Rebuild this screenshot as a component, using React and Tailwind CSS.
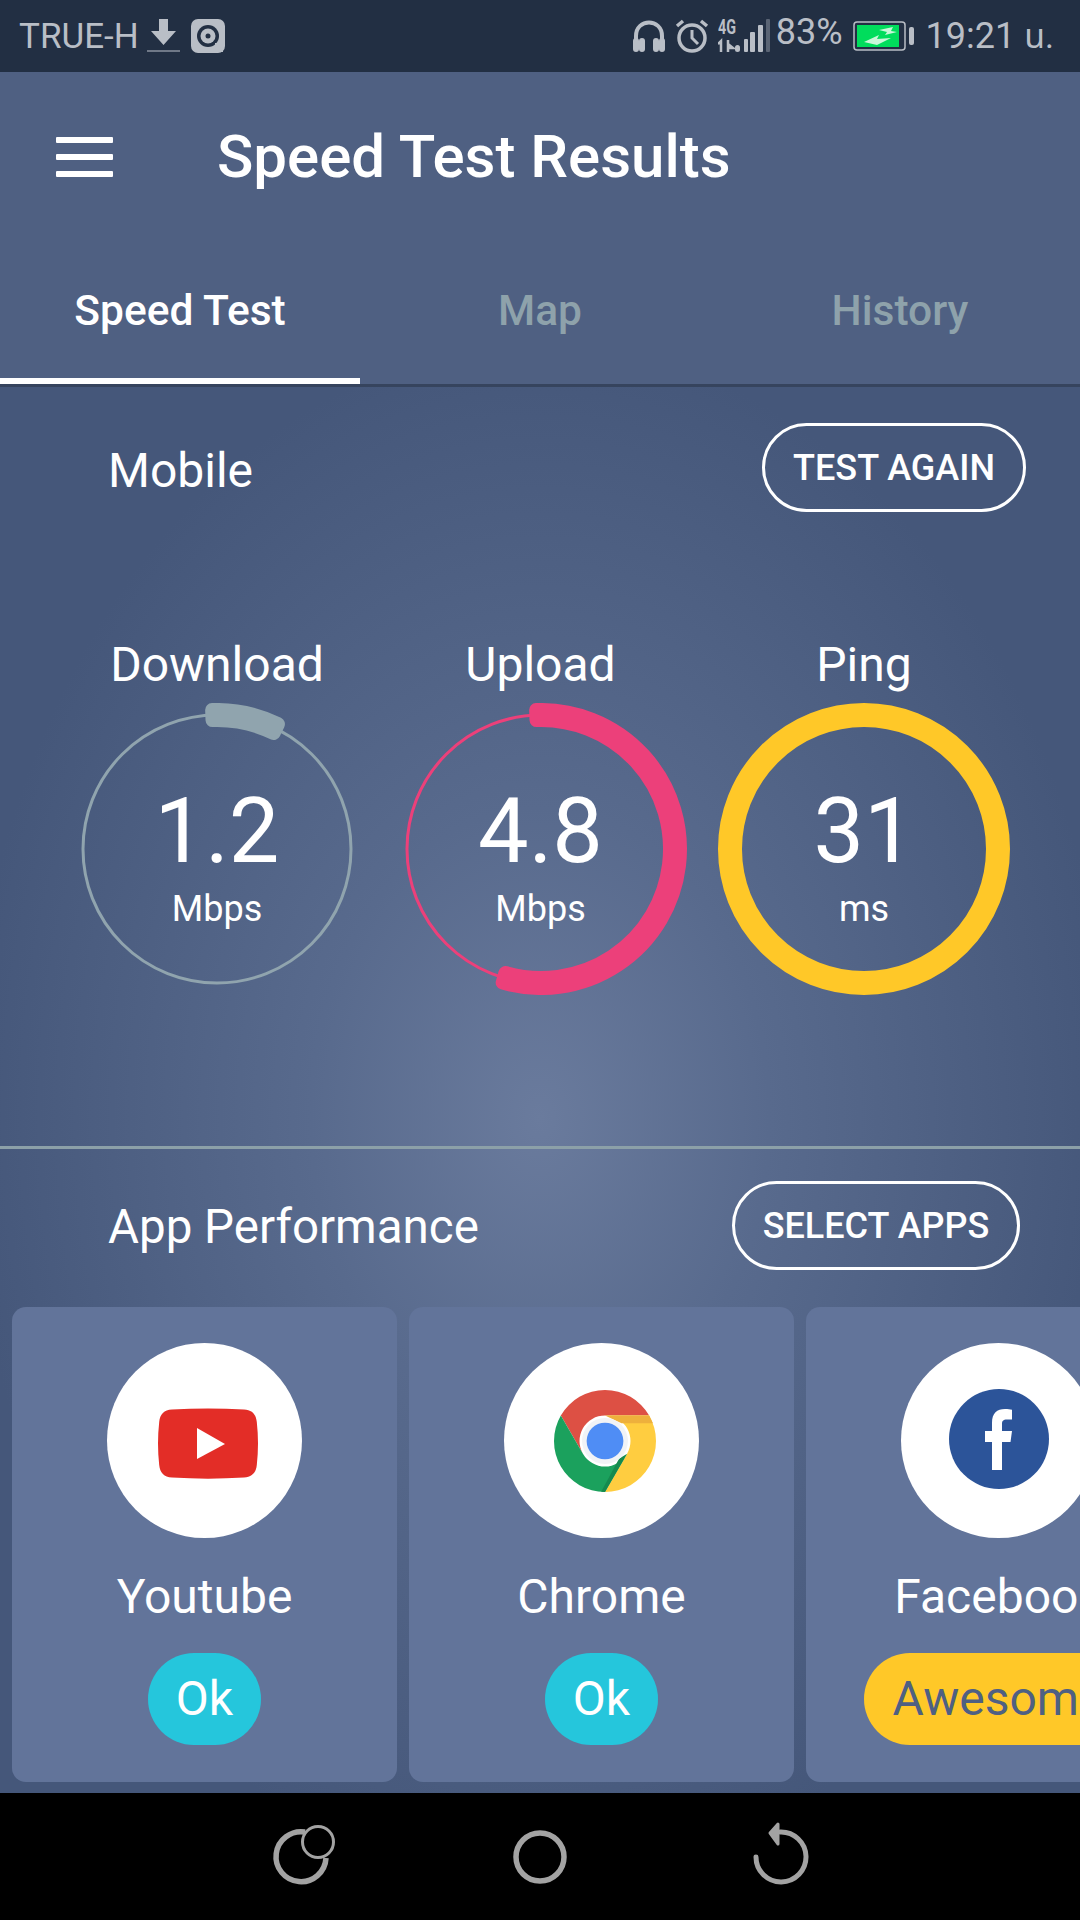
const font = { sans: "font-['Roboto','Noto_Sans','Noto_Sans_Thai',sans-serif]" };

// annular sector with soft corners, angles in degrees clockwise from 12 o'clock
function sector(cx, cy, r1, r2, a1, a2) {
  const pt = (r, a) => {
    const t = ((a - 90) * Math.PI) / 180;
    return `${(cx + r * Math.cos(t)).toFixed(2)} ${(cy + r * Math.sin(t)).toFixed(2)}`;
  };
  const big = a2 - a1 > 180 ? 1 : 0;
  return `M${pt(r2, a1)} A${r2} ${r2} 0 ${big} 1 ${pt(r2, a2)} L${pt(r1, a2)} A${r1} ${r1} 0 ${big} 0 ${pt(r1, a1)} Z`;
}

function Gauge({ label, value, unit, color, from, to, full }) {
  return (
    <div className="flex w-[292px] shrink-0 flex-col items-center">
      <div className="mb-[11px] text-[48px] leading-[54px] text-white">{label}</div>
      <div className="relative h-[292px] w-[292px]">
        <svg width="292" height="292" viewBox="0 0 292 292">
          {full ? (
            <circle cx="146" cy="146" r="134" fill="none" stroke={color} strokeWidth="24" />
          ) : (
            <>
              <circle cx="146" cy="146" r="134" fill="none" stroke={color} strokeWidth="3" />
              <path
                d={sector(146, 146, 129, 139, from, to)}
                fill={color}
                stroke={color}
                strokeWidth="14"
                strokeLinejoin="round"
              />
            </>
          )}
        </svg>
        <div className="absolute inset-0 flex flex-col items-center">
          <div className="mt-[76px] text-[90px] leading-[106px] text-white">{value}</div>
          <div className="mt-[3px] text-[36px] leading-[42px] text-white">{unit}</div>
        </div>
      </div>
    </div>
  );
}

function OutlineButton({ children, className }) {
  return (
    <div
      className={`flex h-[89px] items-center justify-center rounded-full border-[3px] border-white text-[36px] font-medium text-white ${className}`}
    >
      {children}
    </div>
  );
}

function YoutubeIcon() {
  return (
    <svg width="100" height="71" viewBox="0 0 100 71" className="translate-x-[3px] translate-y-[3px]">
      <path
        d="M14 1.500C38 0 62 0 86 1.500 94 2 98 6 98.800 14 100.400 28 100.400 43 98.800 57 98 65 94 69 86 69.500 62 71 38 71 14 69.500 6 69 2 65 1.200 57 -.4 43 -.4 28 1.200 14 2 6 6 2 14 1.500Z"
        fill="#e32d27"
      />
      <path d="M39 20 L67 36 L39 51Z" fill="#fff" />
    </svg>
  );
}

function ChromeIcon() {
  return (
    <svg width="102" height="102" viewBox="4 4 40 40" className="translate-x-[3px]">
      <path d="M24 14H41.320A20 20 0 0 0 6.680 14L15.340 29A10 10 0 0 1 24 14Z" fill="#dd5044" />
      <path d="M41.320 14H24A10 10 0 0 1 32.660 29L24 44A20 20 0 0 0 41.320 14Z" fill="#ffcd40" />
      <path d="M41.320 14H24L30.500 17H42.800Z" fill="#eeb03c" />
      <path d="M24 44L32.660 29A10 10 0 0 1 15.340 29L6.680 14A20 20 0 0 0 24 44Z" fill="#1ba15d" />
      <path d="M32.660 29L24 44L22.500 43.900L29.500 31Z" fill="#158a4e" />
      <circle cx="24" cy="24" r="9" fill="#f1f3f6" />
      <circle cx="24" cy="24" r="7.200" fill="#4f8df5" />
    </svg>
  );
}

function FacebookIcon() {
  return (
    <svg width="100" height="100" viewBox="0 0 100 100" className="-translate-y-[2px]">
      <circle cx="50" cy="50" r="50" fill="#2c5499" />
      <path
        d="M43 81V53H36V42H43V34C43 24 48 20 56 20C59 20 61 20.500 63 20.800V30.500H58C54 30.500 53 32 53 35V42H63L61.500 53H53V81Z"
        fill="#fff"
      />
    </svg>
  );
}

const apps = [
  { name: "Youtube", status: "Ok", icon: <YoutubeIcon /> },
  { name: "Chrome", status: "Ok", icon: <ChromeIcon /> },
  { name: "Facebook", status: "Awesome", icon: <FacebookIcon />, good: true },
];

function AppCard({ app }) {
  return (
    <div className="flex h-[475px] w-[385px] shrink-0 flex-col items-center rounded-[14px] bg-[#62749a] pt-[36px]">
      <div className="flex h-[195px] w-[195px] shrink-0 items-center justify-center rounded-full bg-white">
        {app.icon}
      </div>
      <div className="mt-[32px] text-[48px] leading-[54px] whitespace-nowrap text-white">{app.name}</div>
      <div
        className={`mt-[29px] flex h-[92px] items-center rounded-full text-[48px] whitespace-nowrap ${
          app.good ? "bg-[#ffc828] px-[29px] text-[#4f6082]" : "bg-[#25c6dc] px-[28px] text-white"
        }`}
      >
        {app.status}
      </div>
    </div>
  );
}

function StatusBar() {
  const c = "#b9bec6";
  return (
    <div className="flex h-[72px] shrink-0 items-center justify-between bg-[#222f43] pr-[26px] pl-[19px] text-[#b9bec6]">
      <div className="flex items-center">
        <span className="text-[35px] leading-none">TRUE-H</span>
        <svg width="34" height="36" viewBox="0 0 34 36" className="ml-[8px]">
          <path d="M12 1H21V13H29L16.500 27L4 13H12Z" fill={c} />
          <rect x="0" y="32" width="33" height="2" fill="#6f7887" />
        </svg>
        <svg width="34" height="34" viewBox="0 0 34 34" className="ml-[10px]">
          <rect width="34" height="34" rx="7" fill={c} />
          <circle cx="17" cy="17" r="11" fill="#222f43" />
          <circle cx="17" cy="17" r="7.500" fill={c} />
          <circle cx="17" cy="17" r="2.500" fill="#222f43" />
          <path d="M24 24H32V33H24Z" fill={c} />
        </svg>
      </div>
      <div className="flex items-center">
        <svg width="32" height="34" viewBox="0 0 32 34">
          <path d="M3 28V17C3 -1 29 -1 29 17V28" fill="none" stroke={c} strokeWidth="4" />
          <rect x="0" y="19" width="6" height="14" rx="3" fill={c} />
          <rect x="6" y="19" width="6" height="14" rx="3" fill={c} />
          <rect x="20" y="19" width="6" height="14" rx="3" fill={c} />
          <rect x="26" y="19" width="6" height="14" rx="3" fill={c} />
        </svg>
        <svg width="34" height="34" viewBox="0 0 34 34" className="ml-[10px]">
          <circle cx="17" cy="19" r="13" fill="none" stroke={c} strokeWidth="3.500" />
          <path d="M17 11V19L23 25" fill="none" stroke={c} strokeWidth="3" />
          <path d="M2 7L8 2M32 7L26 2" fill="none" stroke={c} strokeWidth="3.500" />
        </svg>
        <svg width="54" height="46" viewBox="0 -6 54 46" className="ml-[9px]">
          <text
            x="0"
            y="15"
            fontSize="20"
            fontWeight="700"
            fontFamily="Roboto, sans-serif"
            fill={c}
            textLength="18"
            lengthAdjust="spacingAndGlyphs"
          >
            4G
          </text>
          <path d="M3 33V22L0 25M10 21V33M10 25L15 29H10" fill="none" stroke={c} strokeWidth="2.500" />
          <rect x="17" y="26" width="5" height="7" rx="2.500" fill={c} />
          <rect x="26" y="20" width="4" height="13" rx="1" fill={c} />
          <rect x="32" y="13" width="5" height="20" rx="1" fill={c} />
          <rect x="40" y="6" width="5" height="27" rx="1" fill={c} />
          <rect x="48" y="0" width="4" height="33" rx="1" fill="#5a6474" />
        </svg>
        <span className="mb-[9px] ml-[4px] text-[36px] leading-none">83%</span>
        <svg width="62" height="30" viewBox="0 0 62 30" className="ml-[10px]">
          <rect x="1" y="1" width="51" height="28" rx="3" fill="none" stroke={c} strokeWidth="1.500" />
          <rect x="4" y="4" width="42" height="22" fill="#00dd5c" />
          <path d="M11 21L26 14L24 18L38 17L24 24ZM26 9L40 6L38 10L44 11L32 14L34 11Z" fill="#c9f7d9" />
          <rect x="56" y="6" width="5" height="18" rx="2" fill={c} />
        </svg>
        <span className="ml-[11px] text-[36px] leading-none">19:21</span>
        <span className="ml-[9px] text-[34px] leading-none">น.</span>
      </div>
    </div>
  );
}

function NavBar() {
  return (
    <div className="flex h-[127px] shrink-0 items-center justify-center bg-black">
      <svg width="600" height="80" viewBox="240 1817 600 80" fill="none" stroke="#a3a3a3">
        <path d="M305 1832A25 25 0 1 0 326 1858" strokeWidth="5.500" />
        <circle cx="318" cy="1842" r="15.500" strokeWidth="3" />
        <circle cx="540" cy="1857" r="24" strokeWidth="5.500" />
        <path d="M756 1857A25 25 0 1 0 780 1832" strokeWidth="5" strokeLinecap="round" />
        <path d="M770 1833L778 1824V1844Z" fill="#a3a3a3" strokeWidth="3" strokeLinejoin="round" />
      </svg>
    </div>
  );
}

export default function App() {
  return (
    <div className={`flex h-[1920px] w-[1080px] flex-col overflow-hidden ${font.sans}`}>
      <StatusBar />

      <div className="flex h-[170px] shrink-0 items-center bg-[#4f6082]">
        <div className="ml-[56px] flex w-[57px] flex-col gap-[11px]">
          <div className="h-[6px] rounded-[1px] bg-white" />
          <div className="h-[6px] rounded-[1px] bg-white" />
          <div className="h-[6px] rounded-[1px] bg-white" />
        </div>
        <div className="ml-[104px] text-[60px] font-medium text-white">Speed Test Results</div>
      </div>

      <div className="flex h-[145px] shrink-0 border-b-[3px] border-[#36445e] bg-[#4f6082] text-[42.500px] font-medium">
        <div className="flex w-[360px] items-center justify-center border-b-[6px] border-white pt-px text-white">
          Speed Test
        </div>
        <div className="flex w-[360px] items-center justify-center pb-[5px] text-[#8ea2ab]">Map</div>
        <div className="flex w-[360px] items-center justify-center pb-[5px] text-[#8ea2ab]">History</div>
      </div>

      <div className="flex min-h-0 flex-1 flex-col bg-[radial-gradient(ellipse_at_50%_52%,#6a7b9d_0%,#586a8d_30%,#45577a_75%)]">
        <div className="flex h-[762px] shrink-0 flex-col border-b-[3px] border-[#8ca0a8] pt-[36px]">
          <div className="flex items-center justify-between pr-[54px] pl-[108px]">
            <div className="mt-[6px] text-[48px] text-white">Mobile</div>
            <OutlineButton className="w-[264px]">TEST AGAIN</OutlineButton>
          </div>
          <div className="mt-[126px] flex gap-[31.500px] pl-[71px]">
            <Gauge label="Download" value="1.2" unit="Mbps" color="#90a4ae" from={-2} to={26} />
            <Gauge label="Upload" value="4.8" unit="Mbps" color="#ec407a" from={-2} to={196} />
            <Gauge label="Ping" value="31" unit="ms" color="#ffc828" full />
          </div>
        </div>

        <div className="flex items-center justify-between pt-[32px] pr-[60px] pl-[108px]">
          <div className="mt-[4px] text-[47.500px] text-white">App Performance</div>
          <OutlineButton className="w-[288px]">SELECT APPS</OutlineButton>
        </div>

        <div className="mt-[37px] flex gap-[12px] pl-[12px]">
          {apps.map((app) => (
            <AppCard key={app.name} app={app} />
          ))}
        </div>
      </div>

      <NavBar />
    </div>
  );
}
